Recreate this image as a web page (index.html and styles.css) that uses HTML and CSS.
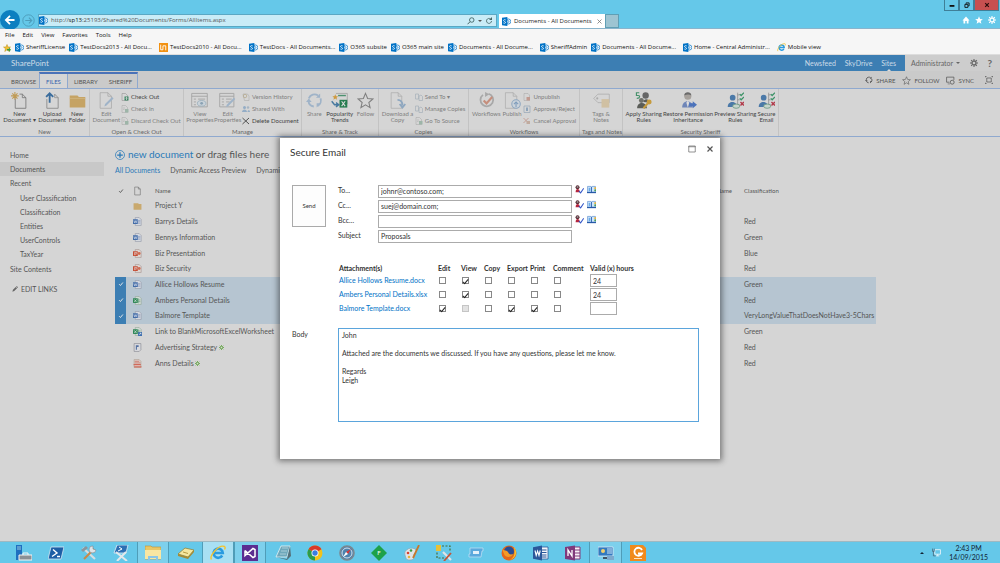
FILE: index.html
```html
<!DOCTYPE html>
<html lang="en">
<head>
<meta charset="utf-8">
<meta name="viewport" content="width=device-width, initial-scale=1">
<title>Documents - All Documents</title>
<link rel="stylesheet" href="styles.css">
</head>
<body>
<svg class="sprite" aria-hidden="true">
  <symbol id="sp" viewBox="0 0 16 16"><circle cx="11" cy="8" r="4.6" fill="#fff" stroke="#0072c6" stroke-width="1.3"/><path d="M9 5l4 3-4 3" fill="none" stroke="#0072c6" stroke-width="1.2"/><path d="M0 1.500L9.500 0v16L0 14.500z" fill="#0072c6"/><path d="M6.500 5.200C4 4 2.500 5 2.700 6.300c.3 1.700 3.600 1.700 3.600 3.400 0 1.500-2 2-3.900.9" fill="none" stroke="#fff" stroke-width="1.400"/></symbol>
  <symbol id="ie" viewBox="0 0 16 16"><path d="M12.200 10.500a4.600 4.600 0 1 1 .6-2.500H4" fill="none" stroke="#2a9be0" stroke-width="2.600"/><path d="M1.500 14.500C-1 11 9-1 14.500 1.500c1 .8.6 2 0 3" fill="none" stroke="#f4c430" stroke-width="1.400"/></symbol>
  <symbol id="word" viewBox="0 0 16 16"><path d="M6 2h9v12H6z" fill="#f4f6fa" stroke="#2b579a" stroke-width=".8"/><path d="M8 5h5.500M8 7.500h5.500M8 10h5.500M8 12h5.500" stroke="#2b579a"/><path d="M0 2.200L9 .5v15L0 13.800z" fill="#2b579a"/><path d="M2 5.500l1.200 5 1.400-4.500L6 10.500l1.200-5" fill="none" stroke="#fff" stroke-width="1.100"/></symbol>
  <symbol id="doc-w" viewBox="0 0 16 16"><path d="M4 1h7l3.500 3.500V15H4z" fill="#d8dbe2" stroke="#8b91a0"/><path d="M8 6h5M8 8.500h5M8 11h5" stroke="#6c86b4"/><path d="M0 4h8.500v8.500H0z" fill="#446da8"/><path d="M1.500 6l1.300 4.500 1.400-4 1.400 4L7 6" fill="none" stroke="#dde4ef"/></symbol>
  <symbol id="doc-p" viewBox="0 0 16 16"><path d="M4 1h7l3.500 3.500V15H4z" fill="#dfd6d2" stroke="#a08f8b"/><circle cx="11" cy="8" r="2.500" fill="#cf6a50"/><path d="M0 4h8.500v8.500H0z" fill="#c54e35"/><path d="M3 11V6h2.500a1.300 1.300 0 0 1 0 3H3" fill="none" stroke="#eee"/></symbol>
  <symbol id="doc-x" viewBox="0 0 16 16"><path d="M4 1h7l3.500 3.500V15H4z" fill="#d5ddd8" stroke="#8ba090"/><path d="M10 4v9M8 7h5M8 10h5" stroke="#5a9a74"/><path d="M0 4h8.500v8.500H0z" fill="#2f8656"/><path d="M2 6l4.500 5M6.500 6L2 11" stroke="#e2eee6" stroke-width="1.200"/></symbol>
  <symbol id="doc-xl" viewBox="0 0 16 16"><use href="#doc-x"/><path d="M9 9h7v7H9z" fill="#3f6fae"/><path d="M11 14l3-3m-2 0h2v2" stroke="#fff" fill="none"/></symbol>
  <symbol id="doc-t" viewBox="0 0 16 16"><path d="M2 1h12v11l-3 3H2z" fill="#d9dade" stroke="#7d7f88"/><path d="M5 4h5v3H7v5H5z" fill="#5470a0"/></symbol>
  <symbol id="doc-pdf" viewBox="0 0 16 16"><path d="M2 1h9l3 3v11H2z" fill="#dfd2d0" stroke="#a98"/><path d="M3 4h8M3 7h10" stroke="#c8705f" stroke-width="1.500"/><path d="M1 9h13v2H1zM2 13h13v2H2z" fill="#cf6a5a"/></symbol>
  <symbol id="folder" viewBox="0 0 16 16"><path d="M1 3h8l1.500 1.500H15v10H1z" fill="#c9a96e"/></symbol>
  <symbol id="page" viewBox="0 0 16 16"><path d="M3 1h6.500L13 4.500V15H3zM9.500 1v3.500H13" fill="none" stroke="#777" stroke-width="1.200"/></symbol>
  <symbol id="tick" viewBox="0 0 16 16"><path d="M3 8.500L6.500 12 13 4" fill="none" stroke="currentColor" stroke-width="2.400"/></symbol>
  <symbol id="newdoc" viewBox="0 0 24 24"><path d="M6 9v14h15V8l-5-5h-4M16 3v5h5" fill="none" stroke="#777" stroke-width="1.200"/><path d="M5.500 0v11M0 5.500h11M1.800 1.800l7.400 7.400M9.200 1.800L1.800 9.200" stroke="#c09b55" stroke-width="1.500"/></symbol>
  <symbol id="upload" viewBox="0 0 24 24"><path d="M4 10v13h16V8l-5-5" fill="none" stroke="#888" stroke-width="1.200"/><path d="M15 3v5h5" fill="none" stroke="#888"/><path d="M8 15V2M3 7l5-5 5 5" fill="none" stroke="#3a6c9c" stroke-width="2.600"/></symbol>
  <symbol id="bigfolder" viewBox="0 0 24 24"><path d="M1 5h11l2 2h9v15H1z" fill="#c5a364"/><path d="M1 9h22" stroke="#d4ba86"/></symbol>
  <symbol id="editdoc" viewBox="0 0 24 24"><path d="M3 1h11l5 5v17H3zM14 1v5h5" fill="none" stroke="#a5a5a5"/><path d="M22 9L12 19l-3 1.500 1-3.500L20 7z" fill="#9fb3c8"/></symbol>
  <symbol id="viewprop" viewBox="0 0 24 24"><path d="M1 2h22v19H1zM1 6h22M4 10h3M10 10h10M4 14h3M4 18h3" fill="none" stroke="#a5a5a5" stroke-width="1.300"/><ellipse cx="15" cy="16" rx="6" ry="4" fill="#c9d2d9" stroke="#90a8b8"/><circle cx="15" cy="16" r="2" fill="#8aa2b4"/></symbol>
  <symbol id="editprop" viewBox="0 0 24 24"><path d="M1 2h20v19H1zM1 6h20M4 10h3M10 10h8M4 14h3M10 14h5M4 18h3" fill="none" stroke="#a5a5a5" stroke-width="1.300"/><path d="M23 10L13 20l-3 1 1-3L21 8z" fill="#9fb3c8"/></symbol>
  <symbol id="share" viewBox="0 0 24 24"><path d="M4 9a8.500 8.500 0 0 1 13-4M20.500 9a8.500 8.500 0 0 1-4 10.500M11 20.500A8.500 8.500 0 0 1 3.500 13" fill="none" stroke="currentColor" stroke-width="2.600"/><path d="M14 8h6V2zM21 16h-6v6zM0 14l4-5 4 5z" fill="currentColor"/></symbol>
  <symbol id="trends" viewBox="0 0 24 24"><path d="M7 2h16v15" fill="none" stroke="#999"/><path d="M10 5h11" stroke="#4d9170" stroke-width="2"/><path d="M12 11h11v11H12z" fill="#277d50"/><path d="M15 13l5 7m0-7l-5 7" stroke="#ddd" stroke-width="1.500"/><path d="M6 3l1.200 3H10L7.800 8l.8 3L6 9.300 3.400 11l.8-3L2 6h2.800z" fill="#cf9a3e"/><path d="M1 13l4 5h5M7 15l4 3-4 3" fill="none" stroke="#47799f" stroke-width="2"/></symbol>
  <symbol id="star" viewBox="0 0 24 24"><path d="M12 2l3 7.200 7.500.6-5.800 5 1.800 7.400L12 18.200 5.500 22.200l1.800-7.400-5.800-5 7.500-.6z" fill="none" stroke="currentColor" stroke-width="1.500"/></symbol>
  <symbol id="download" viewBox="0 0 24 24"><path d="M3 1h10l5 5v17H3zM13 1v5h5" fill="none" stroke="#aaa"/><path d="M12 11c6 0 7 4 7 8M15 17l4 5 4-5" fill="none" stroke="#8ea7c0" stroke-width="2.500"/></symbol>
  <symbol id="workflow" viewBox="0 0 24 24"><path d="M7 4a9 9 0 1 0 8-1.500" fill="none" stroke="#a8a8a8" stroke-width="2.500"/><path d="M10 0v7l6-4z" fill="#a8a8a8"/><path d="M8 12l4 4 8-9" fill="none" stroke="#c58e7c" stroke-width="3"/></symbol>
  <symbol id="publish" viewBox="0 0 24 24"><path d="M2 1h11l5 5v17H2zM13 1v5h5" fill="none" stroke="#aaa"/><circle cx="17" cy="17" r="6" fill="#cbd3db" stroke="#8ea7c0" stroke-width="1.500"/><path d="M17 21v-7m-3 3l3-3 3 3" fill="none" stroke="#7e9cbb" stroke-width="1.500"/></symbol>
  <symbol id="tags" viewBox="0 0 24 24"><path d="M1 9l6-6h16v12H7z" fill="none" stroke="#a9a9a9"/><circle cx="6" cy="9" r="1.500" fill="#aaa"/><path d="M12 10h11v12H12z" fill="#d0c0a2"/></symbol>
  <symbol id="rules" viewBox="0 0 24 24"><circle cx="15" cy="5" r="4.500" fill="#666"/><circle cx="9" cy="12" r="3.500" fill="#70716b"/><path d="M3 23c0-10 13-10 14 0zM12 14c0-5 8-5 9 1z" fill="#5b5d58"/><path d="M6 1H2v4h2.500c3 0 3 4-2 4" fill="none" stroke="#44906a" stroke-width="1.600"/><circle cx="20" cy="14" r="3.500" fill="#c69b3d"/><path d="M18 16l-6 7" stroke="#c69b3d" stroke-width="3"/></symbol>
  <symbol id="person" viewBox="0 0 24 24"><circle cx="11" cy="6" r="5" fill="#a6a19c"/><path d="M6 5c0-6 10-6 10 0-3-2-6-2-10 0z" fill="#6b6b6b"/><path d="M3 22c0-12 15-12 15 0z" fill="#6f86b8"/><path d="M11 12l-2 3 2 7 2-7z" fill="#ddd"/><path d="M13 16h5v-3l6 5-6 5v-3h-5z" fill="#4c73bb"/></symbol>
  <symbol id="people" viewBox="0 0 24 24"><circle cx="8" cy="8" r="4" fill="#4b79a8"/><path d="M1 21c0-9 13-9 13 0z" fill="#4b79a8"/><path d="M15 1v19M15 4h3M15 11h3M15 18h3" stroke="#888"/><path d="M18 3l2 2 4-4M18 9l2 2 4-4" fill="none" stroke="#3c9367" stroke-width="1.800"/><path d="M19 14l5 5m0-5l-5 5" stroke="#b23b4b" stroke-width="2"/><ellipse cx="13" cy="20" rx="5" ry="3" fill="#c7d4cc" stroke="#5c9078"/></symbol>
  <symbol id="s-out" viewBox="0 0 16 16"><path d="M2 1h7l4 4v10H2z" fill="none" stroke="#888"/><path d="M7 7h8v8H7z" fill="#3b8462"/><path d="M11 14V9M8.500 11L11 8.500l2.500 2.500" stroke="#ddd" fill="none" stroke-width="1.500"/></symbol>
  <symbol id="s-dim" viewBox="0 0 16 16"><path d="M2 1h7l4 4v10H2z" fill="none" stroke="#a5a5a5"/><path d="M8 8h7v7H8z" fill="#9db5a8"/><path d="M4 6h4M4 9h3" stroke="#aaa"/></symbol>
  <symbol id="s-send" viewBox="0 0 16 16"><path d="M1 2h6v10H1zM8 6l4-2 3 3v8H8z" fill="none" stroke="#a2adb8" stroke-width="1.300"/></symbol>
  <symbol id="s-red" viewBox="0 0 16 16"><path d="M2 1h8l3 3v11H2z" fill="none" stroke="#a5a5a5"/><path d="M7 8h7v7H7z" fill="#c19a90"/></symbol>
  <symbol id="s-app" viewBox="0 0 16 16"><path d="M2 2h12v13H2z" fill="none" stroke="#96a6b8" stroke-width="1.400"/><path d="M6 5h4v7H6z" fill="#8ea4ba"/></symbol>
  <symbol id="s-cross" viewBox="0 0 16 16"><path d="M1 2l10 10M11 2L1 12" stroke="#c19a90" stroke-width="1.800"/><path d="M7 8h7v6H7z" fill="#c0ab9f"/></symbol>
  <symbol id="s-hist" viewBox="0 0 16 16"><path d="M2 2h9l3 4v9H5z" fill="none" stroke="#a5a5a5"/><circle cx="6" cy="6" r="3.500" fill="none" stroke="#b5a98c" stroke-width="1.500"/></symbol>
  <symbol id="s-peo" viewBox="0 0 16 16"><circle cx="5" cy="5" r="3" fill="#94adc6"/><circle cx="12" cy="5" r="2.500" fill="#a6b5c3"/><path d="M0 14c0-7 10-7 10 0zM11 14c0-5 5-5 5 0z" fill="#94adc6"/></symbol>
  <symbol id="s-x" viewBox="0 0 16 16"><path d="M1 2l13 12M14 2L1 14" stroke="#444" stroke-width="1.800"/></symbol>
  <symbol id="gear" viewBox="0 0 16 16"><circle cx="8" cy="8" r="4" fill="none" stroke="currentColor" stroke-width="2.600"/><path d="M8 0v3M8 13v3M0 8h3M13 8h3M2.300 2.300l2 2M11.700 11.700l2 2M2.300 13.700l2-2M11.700 4.300l2-2" stroke="currentColor" stroke-width="2.200"/></symbol>
  <symbol id="syncic" viewBox="0 0 16 16"><path d="M6 11H1V2h13v5" fill="none" stroke="currentColor" stroke-width="1.300"/><path d="M3 14h4" stroke="currentColor"/><circle cx="11" cy="11" r="3.500" fill="none" stroke="currentColor" stroke-width="1.400"/></symbol>
  <symbol id="focus" viewBox="0 0 16 16"><path d="M3.500 4h9v8h-9zM0 3V1h3M13 1h3v2M16 13v2h-3M3 15H0v-2" fill="none" stroke="currentColor" stroke-width="1.400"/></symbol>
  <symbol id="pencil" viewBox="0 0 16 16"><path d="M1 15l1.500-5L10 2.500l3.500 3.500L6 13.500zM11 1.500L12.500 0 16 3.500 14.500 5z" fill="#666"/></symbol>
  <symbol id="plus" viewBox="0 0 16 16"><circle cx="8" cy="8" r="7.200" fill="none" stroke="#2a7ab8" stroke-width="1.200"/><path d="M8 3.500v9M3.500 8h9" stroke="#2a7ab8" stroke-width="2"/></symbol>
  <symbol id="check-names" viewBox="0 0 16 16"><circle cx="4.500" cy="4" r="3.500" fill="#5a2a34"/><path d="M1 13c0-8 7-8 8 0z" fill="#b5263e"/><path d="M3 2h3v3H3z" fill="#999"/><path d="M7 11l3 3L15.500 6" fill="none" stroke="#3557c8" stroke-width="1.800"/></symbol>
  <symbol id="book" viewBox="0 0 16 16"><path d="M1 2.500h6l1 1 1-1h6v10H1z" fill="#cfe6fb" stroke="#5d8fd0" stroke-width="1.200"/><path d="M0 13.500h16" stroke="#2456a6" stroke-width="2"/><path d="M8 3.500v9" stroke="#2d62b0" stroke-width="1.600"/><path d="M3 5h3v6H3z" fill="#69a9e6"/><path d="M13 4h3v3h-3z" fill="#e8b53c"/><path d="M13 8h3v3h-3z" fill="#4ba05a"/></symbol>
</svg>

<header class="chrome">
  <nav class="navrow">
    <button class="back" aria-label="Back"><svg viewBox="0 0 16 16"><path d="M14 8H3M8 2.500L2.500 8 8 13.500" fill="none" stroke="#fff" stroke-width="2.400"/></svg></button>
    <button class="forward" aria-label="Forward"><svg viewBox="0 0 16 16"><circle cx="8" cy="8" r="7" fill="none" stroke="#4d9dbb" stroke-width="1.200"/><path d="M4 8h8M8.500 4.500L12 8l-3.500 3.500" fill="none" stroke="#4d9dbb" stroke-width="1.400"/></svg></button>
    <div class="address">
      <svg class="i9"><use href="#sp"/></svg>
      <span class="url">http://<b>sp13</b>:25193/Shared%20Documents/Forms/AllItems.aspx</span>
      <button class="plain" aria-label="Search"><svg class="i8" viewBox="0 0 16 16"><circle cx="9.500" cy="6" r="4.500" fill="none" stroke="#466" stroke-width="1.800"/><path d="M6 9.500l-5 5" stroke="#466" stroke-width="2"/></svg></button>
      <span class="caret"></span>
      <button class="plain" aria-label="Refresh"><svg class="i8" viewBox="0 0 16 16"><path d="M13 8a5 5 0 1 1-2-4.200" fill="none" stroke="#466" stroke-width="1.700"/><path d="M8 6h6V0z" fill="#466"/></svg></button>
    </div>
    <div class="btab"><svg class="i9"><use href="#sp"/></svg><span>Documents - All Documents</span><button class="plain" aria-label="Close tab"><svg class="i5" viewBox="0 0 10 10"><path d="M1 1l8 8M9 1L1 9" stroke="#777" stroke-width="1.600"/></svg></button></div>
    <button class="newtab" aria-label="New tab"></button>
    <div class="corner">
      <div class="winbtns">
        <button aria-label="Minimize"><svg viewBox="0 0 10 10"><path d="M1 5h8v3H1z" fill="#111"/></svg></button>
        <button aria-label="Restore"><svg viewBox="0 0 10 10"><path d="M1.500 4h5v5h-5zM3.500 3V1.500h5v5H7" fill="none" stroke="#111" stroke-width="1.500"/></svg></button>
        <button class="close" aria-label="Close"><svg viewBox="0 0 10 10"><path d="M2 2l6 6M8 2L2 8" stroke="#2a0c0a" stroke-width="2"/></svg></button>
      </div>
      <div class="tools">
        <button class="plain" aria-label="Home"><svg class="i8" viewBox="0 0 16 16"><path d="M1 9l7-8 7 8h-2v6H9.500v-5h-3v5H3V9z" fill="#fff"/></svg></button>
        <button class="plain" aria-label="Favorites"><svg class="i8" viewBox="0 0 24 24"><path d="M12 1l3.200 7.800 8.300.6-6.400 5.300 2 8.300L12 18.500 4.900 23l2-8.300L.5 9.400l8.300-.6z" fill="#fff"/></svg></button>
        <button class="plain" aria-label="Tools"><svg class="i8"><use href="#gear"/></svg></button>
      </div>
    </div>
  </nav>
</header>

<div class="bars">
  <nav class="menu"><a href="#">File</a><a href="#">Edit</a><a href="#">View</a><a href="#">Favorites</a><a href="#">Tools</a><a href="#">Help</a></nav>
  <nav class="favs">
    <svg class="i8" viewBox="0 0 16 16"><path d="M8 1l2 5h5l-4 3.500L12.500 15 8 11.500 3.500 15 5 9.500 1 6h5z" fill="#f0c033" stroke="#b88a14"/><path d="M8 10h4V7l4 4.500L12 16v-3H8z" fill="#3d9b40"/></svg>
    <a href="#"><svg class="i9"><use href="#sp"/></svg>SheriffLicense</a>
    <a href="#" class="cut"><svg class="i9"><use href="#sp"/></svg>TestDocs2013 - All Docu...</a>
    <a href="#" class="cut"><svg class="i9" viewBox="0 0 16 16"><path d="M0 0h16v16H0z" fill="#f29111"/><path d="M3 3v9h4V5h5v8" fill="none" stroke="#fff" stroke-width="1.600"/></svg>TestDocs2010 - All Docu...</a>
    <a href="#"><svg class="i9"><use href="#sp"/></svg>TestDocs - All Documents...</a>
    <a href="#"><svg class="i9"><use href="#sp"/></svg>O365 subsite</a>
    <a href="#"><svg class="i9"><use href="#sp"/></svg>O365 main site</a>
    <a href="#" class="cut"><svg class="i9"><use href="#sp"/></svg>Documents - All Docume...</a>
    <a href="#"><svg class="i9"><use href="#sp"/></svg>SheriffAdmin</a>
    <a href="#" class="cut"><svg class="i9"><use href="#sp"/></svg>Documents - All Docume...</a>
    <a href="#" class="cut"><svg class="i9"><use href="#sp"/></svg>Home - Central Administr...</a>
    <a href="#"><svg class="i9"><use href="#ie"/></svg>Mobile view</a>
  </nav>
</div>

<main class="site">
  <div class="suite">
    <span class="brand">SharePoint</span>
    <nav class="suite-links"><a href="#">Newsfeed</a><a href="#">SkyDrive</a><a href="#" class="here">Sites</a></nav>
    <div class="user"><button class="plain">Administrator<span class="caret"></span></button><button class="plain" aria-label="Settings"><svg class="i8"><use href="#gear"/></svg></button><button class="plain help" aria-label="Help">?</button></div>
  </div>

  <div class="tabrow">
    <button class="tab browse">BROWSE</button>
    <div class="tabset"><button class="tab on">FILES</button><button class="tab">LIBRARY</button><button class="tab">SHERIFF</button></div>
    <div class="actions">
      <button class="plain"><svg class="i8"><use href="#share"/></svg>SHARE</button>
      <button class="plain"><svg class="i9"><use href="#star"/></svg>FOLLOW</button>
      <button class="plain"><svg class="i9"><use href="#syncic"/></svg>SYNC</button>
      <button class="plain focus" aria-label="Focus on content"><svg class="i8"><use href="#focus"/></svg></button>
    </div>
  </div>

  <div class="ribbon">
    <section class="group g-new"><div class="row">
      <button class="big"><svg><use href="#newdoc"/></svg>New<br>Document ▾</button>
      <button class="big"><svg><use href="#upload"/></svg>Upload<br>Document</button>
      <button class="big"><svg><use href="#bigfolder"/></svg>New<br>Folder</button></div><h2>New</h2></section>
    <section class="group g-open"><div class="row">
      <button class="big off"><svg><use href="#editdoc"/></svg>Edit<br>Document</button>
      <div class="stack"><button><svg><use href="#s-out"/></svg>Check Out</button><button class="off"><svg><use href="#s-dim"/></svg>Check In</button><button class="off"><svg><use href="#s-dim"/></svg>Discard Check Out</button></div></div><h2>Open &amp; Check Out</h2></section>
    <section class="group g-manage"><div class="row">
      <button class="big off"><svg><use href="#viewprop"/></svg>View<br>Properties</button>
      <button class="big off"><svg><use href="#editprop"/></svg>Edit<br>Properties</button>
      <div class="stack"><button class="off"><svg><use href="#s-hist"/></svg>Version History</button><button class="off"><svg><use href="#s-peo"/></svg>Shared With</button><button><svg><use href="#s-x"/></svg>Delete Document</button></div></div><h2>Manage</h2></section>
    <section class="group g-share"><div class="row">
      <button class="big off"><svg class="soft"><use href="#share"/></svg>Share</button>
      <button class="big"><svg><use href="#trends"/></svg>Popularity<br>Trends</button>
      <button class="big off"><svg><use href="#star"/></svg>Follow</button></div><h2>Share &amp; Track</h2></section>
    <section class="group g-copies"><div class="row">
      <button class="big off"><svg><use href="#download"/></svg>Download a<br>Copy</button>
      <div class="stack"><button class="off"><svg><use href="#s-send"/></svg>Send To ▾</button><button class="off"><svg><use href="#s-send"/></svg>Manage Copies</button><button class="off"><svg><use href="#s-dim"/></svg>Go To Source</button></div></div><h2>Copies</h2></section>
    <section class="group g-flow"><div class="row">
      <button class="big off"><svg><use href="#workflow"/></svg>Workflows</button>
      <button class="big off"><svg><use href="#publish"/></svg>Publish</button>
      <div class="stack"><button class="off"><svg><use href="#s-red"/></svg>Unpublish</button><button class="off"><svg><use href="#s-app"/></svg>Approve/Reject</button><button class="off"><svg><use href="#s-cross"/></svg>Cancel Approval</button></div></div><h2>Workflows</h2></section>
    <section class="group g-tags"><div class="row"><button class="big off"><svg><use href="#tags"/></svg>Tags &amp;<br>Notes</button></div><h2>Tags and Notes</h2></section>
    <section class="group g-sec"><div class="row">
      <button class="big"><svg><use href="#rules"/></svg>Apply Sharing<br>Rules</button>
      <button class="big"><svg><use href="#person"/></svg>Restore Permission<br>Inheritance</button>
      <button class="big"><svg><use href="#people"/></svg>Preview Sharing<br>Rules</button>
      <button class="big"><svg><use href="#people"/></svg>Secure<br>Email</button></div><h2>Security Sheriff</h2></section>
  </div>

  <div class="content">
    <nav class="side">
      <a href="#">Home</a><a href="#" class="current">Documents</a><a href="#">Recent</a>
      <div class="sub"><a href="#">User Classification</a><a href="#">Classification</a><a href="#">Entities</a><a href="#">UserControls</a><a href="#">TaxYear</a></div>
      <a href="#">Site Contents</a>
      <button class="plain edit"><svg class="i8"><use href="#pencil"/></svg>EDIT LINKS</button>
    </nav>
    <section class="library">
      <p class="new"><svg><use href="#plus"/></svg><span><a href="#">new document</a> or drag files here</span></p>
      <nav class="views"><a href="#" class="sel">All Documents</a><a href="#">Dynamic Access Preview</a><a href="#">Dynamic Access</a></nav>
      <table class="files">
        <colgroup><col class="c-tick"><col class="c-type"><col class="c-name"><col class="c-alt"><col></colgroup>
        <thead><tr><th><svg class="i6"><use href="#tick"/></svg></th><th><svg class="i10"><use href="#page"/></svg></th><th>Name</th><th class="alt">Name</th><th>Classification</th></tr></thead>
        <tbody>
          <tr><td></td><td><svg class="i10"><use href="#folder"/></svg></td><td>Project Y</td><td></td><td></td></tr>
          <tr><td></td><td><svg class="i9"><use href="#doc-w"/></svg></td><td>Barrys Details</td><td></td><td>Red</td></tr>
          <tr><td></td><td><svg class="i9"><use href="#doc-w"/></svg></td><td>Bennys Information</td><td></td><td>Green</td></tr>
          <tr><td></td><td><svg class="i9"><use href="#doc-p"/></svg></td><td>Biz Presentation</td><td></td><td>Blue</td></tr>
          <tr><td></td><td><svg class="i9"><use href="#doc-p"/></svg></td><td>Biz Security</td><td></td><td>Red</td></tr>
          <tr class="picked"><td><svg class="i6"><use href="#tick"/></svg></td><td><svg class="i9"><use href="#doc-w"/></svg></td><td>Allice Hollows Resume</td><td></td><td>Green</td></tr>
          <tr class="picked"><td><svg class="i6"><use href="#tick"/></svg></td><td><svg class="i9"><use href="#doc-x"/></svg></td><td>Ambers Personal Details</td><td></td><td>Red</td></tr>
          <tr class="picked"><td><svg class="i6"><use href="#tick"/></svg></td><td><svg class="i9"><use href="#doc-w"/></svg></td><td>Balmore Template</td><td></td><td>VeryLongValueThatDoesNotHave3-5Chars</td></tr>
          <tr><td></td><td><svg class="i9"><use href="#doc-xl"/></svg></td><td>Link to BlankMicrosoftExcelWorksheet</td><td></td><td>Green</td></tr>
          <tr><td></td><td><svg class="i9"><use href="#doc-t"/></svg></td><td>Advertising Strategy <svg class="i5 fresh"><use href="#gear"/></svg></td><td></td><td>Red</td></tr>
          <tr><td></td><td><svg class="i9"><use href="#doc-pdf"/></svg></td><td>Anns Details <svg class="i5 fresh"><use href="#gear"/></svg></td><td></td><td>Red</td></tr>
        </tbody>
      </table>
    </section>
  </div>

  <div class="overlay">
    <form class="dialog" role="dialog" aria-labelledby="dlg-title">
      <header><h1 id="dlg-title">Secure Email</h1>
        <button type="button" class="plain" aria-label="Maximize"><svg class="i8" viewBox="0 0 16 16"><path d="M1.500 2h13v12h-13zM1 3.500h14" fill="none" stroke="#666" stroke-width="1.400"/></svg></button>
        <button type="button" class="plain" aria-label="Close"><svg class="i8" viewBox="0 0 16 16"><path d="M3 3l10 10M13 3L3 13" stroke="#555" stroke-width="2.400"/></svg></button></header>
      <div class="fields">
        <button type="button" class="send">Send</button>
        <div class="rcpts">
          <label for="to">To...</label><input id="to" value="johnr@contoso.com;"><span class="pick"><svg class="i9"><use href="#check-names"/></svg><svg class="i9"><use href="#book"/></svg></span>
          <label for="cc">Cc...</label><input id="cc" value="suej@domain.com;"><span class="pick"><svg class="i9"><use href="#check-names"/></svg><svg class="i9"><use href="#book"/></svg></span>
          <label for="bcc">Bcc...</label><input id="bcc"><span class="pick"><svg class="i9"><use href="#check-names"/></svg><svg class="i9"><use href="#book"/></svg></span>
          <label for="subject">Subject</label><input id="subject" value="Proposals"><span></span>
        </div>
        <table class="rights">
          <colgroup><col class="r-name"><col class="r-flag"><col class="r-flag"><col class="r-flag"><col class="r-flag"><col class="r-flag"><col class="r-comment"><col></colgroup>
          <thead><tr><th>Attachment(s)</th><th>Edit</th><th>View</th><th>Copy</th><th>Export</th><th>Print</th><th>Comment</th><th>Valid (x) hours</th></tr></thead>
          <tbody>
            <tr><td><a href="#">Allice Hollows Resume.docx</a></td><td><input type="checkbox" aria-label="Edit"></td><td><input type="checkbox" aria-label="View" checked></td><td><input type="checkbox" aria-label="Copy"></td><td><input type="checkbox" aria-label="Export"></td><td><input type="checkbox" aria-label="Print"></td><td><input type="checkbox" aria-label="Comment"></td><td><input class="hours" aria-label="Valid hours" value="24"></td></tr>
            <tr><td><a href="#">Ambers Personal Details.xlsx</a></td><td><input type="checkbox" aria-label="Edit"></td><td><input type="checkbox" aria-label="View" checked></td><td><input type="checkbox" aria-label="Copy"></td><td><input type="checkbox" aria-label="Export"></td><td><input type="checkbox" aria-label="Print"></td><td><input type="checkbox" aria-label="Comment"></td><td><input class="hours" aria-label="Valid hours" value="24"></td></tr>
            <tr><td><a href="#">Balmore Template.docx</a></td><td><input type="checkbox" aria-label="Edit" checked></td><td><input type="checkbox" aria-label="View" disabled></td><td><input type="checkbox" aria-label="Copy"></td><td><input type="checkbox" aria-label="Export" checked></td><td><input type="checkbox" aria-label="Print" checked></td><td><input type="checkbox" aria-label="Comment"></td><td><input class="hours" aria-label="Valid hours"></td></tr>
          </tbody>
        </table>
        <label class="body-label" for="body">Body</label>
        <textarea id="body">John

Attached are the documents we discussed. If you have any questions, please let me know.

Regards
Leigh</textarea>
      </div>
    </form>
  </div>
</main>

<footer class="taskbar">
  <div class="apps">
    <button aria-label="Server Manager"><svg viewBox="0 0 16 16"><path d="M0 0h6v15H0z" fill="#1f6fc0"/><path d="M1 2h4M1 4h4" stroke="#9cd"/><path d="M3 10h13v5H3z" fill="#8a9096" stroke="#f5f5f5"/><path d="M7 10V8h5v2" fill="none" stroke="#f5f5f5"/></svg></button>
    <button aria-label="PowerShell"><svg viewBox="0 0 16 16"><path d="M3 2h13l-3 12H0z" fill="#1d5fa6" stroke="#d6e8f5" stroke-width=".8"/><path d="M5 4.500L9 8l-5 3.500M9 11.500h3" fill="none" stroke="#fff" stroke-width="1.400"/></svg></button>
    <button aria-label="Admin Tools"><svg viewBox="0 0 16 16"><path d="M2 3l12 11" stroke="#d8dde0" stroke-width="2.200"/><path d="M0 5l5-4 2 2-5 4z" fill="#8b959c"/><path d="M13 4L3 14" stroke="#c88a4a" stroke-width="2.200"/><path d="M15 5a3.500 3.500 0 1 1-3-4v3z" fill="#dfe4e8" stroke="#7d878e" stroke-width=".6"/></svg></button>
    <button aria-label="Management Shell"><svg viewBox="0 0 16 16"><path d="M4 0h11l-2 8H1z" fill="#2c6fb3" stroke="#e6f0f8" stroke-width=".8"/><path d="M3 7l11 9M13 7L4 16" stroke="#e3e8eb" stroke-width="2"/><path d="M6 2l3 2-4 2" stroke="#fff" fill="none"/></svg></button>
    <button class="open" aria-label="File Explorer"><svg viewBox="0 0 16 16"><path d="M0 1h6l1 1h9v12H0z" fill="#e9c765" stroke="#b99235" stroke-width=".6"/><path d="M0 5h16v9H0z" fill="#f9e6a2"/><path d="M3 16v-5h10v5h-2v-3H5v3z" fill="#8cc6e8"/></svg></button>
    <button aria-label="Notes"><svg viewBox="0 0 16 16"><path d="M0 9l7-6 9 2-6 7z" fill="#f5e7a0" stroke="#8c7a2c" stroke-width=".7"/><path d="M0 9l10 3v2L0 11zM10 12l6-7v2l-6 7z" fill="#a58c35"/><path d="M5 7l5 1.500" stroke="#b59a40"/></svg></button>
    <button class="open ie" aria-label="Internet Explorer"><svg viewBox="0 0 16 16"><use href="#ie"/></svg></button>
    <button class="open" aria-label="Visual Studio"><svg viewBox="0 0 16 16"><path d="M0 0h16v16H0z" fill="#5c2d91"/><path d="M3 5.500v5l8-7 2 1v7l-2 1-8-7" fill="none" stroke="#fff" stroke-width="1.500"/></svg></button>
    <button aria-label="Notebook"><svg viewBox="0 0 16 16"><path d="M6 1h9l-3 11H1z" fill="#6fa8bb" stroke="#e5f1f4" stroke-width=".8"/><path d="M1 12l11 2 3-13 1 10-4 4z" fill="#55707a"/><path d="M7 3h6M6 6h6M5 9h6" stroke="#a9cdd8"/></svg></button>
    <button aria-label="Chrome"><svg viewBox="0 0 16 16"><circle cx="8" cy="8" r="7.500" fill="#f2c21a"/><path d="M8 8L1.500 4.250A7.500 7.500 0 0 1 14.500 4.250z" fill="#d93a2b"/><path d="M8 8L1.500 4.250A7.500 7.500 0 0 0 8 15.500z" fill="#2c9b4a"/><circle cx="8" cy="8" r="3.500" fill="#fff"/><circle cx="8" cy="8" r="2.700" fill="#3a7de0"/></svg></button>
    <button aria-label="Safari"><svg viewBox="0 0 16 16"><circle cx="8" cy="8" r="7" fill="#4f83ae" stroke="#7b8790" stroke-width="1.600"/><circle cx="8" cy="8" r="5" fill="none" stroke="#d4e2ec"/><path d="M12 4L9 9 7 7z" fill="#d33"/><path d="M4 12l5-3-2-2z" fill="#fff"/></svg></button>
    <button aria-label="Fiddler"><svg viewBox="0 0 16 16"><path d="M8 0l8 8-8 8-8-8z" fill="#1ea14a"/><text x="8" y="10" text-anchor="middle" class="logo6">F</text></svg></button>
    <button aria-label="Paint"><svg viewBox="0 0 16 16"><path d="M1 10c-2-6 8-9 11-5 2 3-3 3-2 5s0 5-4 5-4-2-5-5z" fill="#dfe5ea" stroke="#8aa0ad" stroke-width=".6"/><circle cx="4" cy="8" r="1.300" fill="#d9442f"/><circle cx="7" cy="5.500" r="1.300" fill="#3d9b40"/><circle cx="5" cy="12" r="1.300" fill="#e8b53c"/><path d="M15 0L9 13" stroke="#c7792c" stroke-width="1.800"/></svg></button>
    <button aria-label="Snipping"><svg viewBox="0 0 16 16"><path d="M1 4v9h8M6 1h8v6" fill="none" stroke="#4a6c3a" stroke-dasharray="2 1.500" stroke-width="1.200"/><path d="M0 0h5v6H0z" fill="#e8c136"/><path d="M7 7l8 8" stroke="#dfe4e8" stroke-width="2.200"/><path d="M15 8l-7 8" stroke="#c3563a" stroke-width="1.800"/></svg></button>
    <button aria-label="Run"><svg viewBox="0 0 16 16"><path d="M2 3h13v3h-1l-1 6H1V9h1z" fill="#5aa9dd" stroke="#b9ddf2" stroke-width=".8"/><path d="M5 6h6v3H5z" fill="#e3f1fa"/></svg></button>
    <button aria-label="Firefox"><svg viewBox="0 0 16 16"><circle cx="8" cy="8" r="7.500" fill="#e2671b"/><circle cx="8" cy="6.500" r="5" fill="#2b4c92"/><path d="M1 4c2 2 5 1 6 3s2 3 5 2c-1 4-8 4-9 0z" fill="#f39a24"/><path d="M13 2c4 5 2 11-4 13 5-3 5-7 4-13z" fill="#f7c430"/></svg></button>
    <button aria-label="Word"><svg viewBox="0 0 16 16"><use href="#word"/></svg></button>
    <button aria-label="OneNote"><svg viewBox="0 0 16 16"><path d="M7 2h8v12H7z" fill="#f6eef5" stroke="#80397b"/><path d="M10 5h5M10 8h5M10 11h5" stroke="#80397b"/><path d="M0 2l10-1.500v15L0 14z" fill="#80397b"/><path d="M3 11V5l4 6V5" fill="none" stroke="#fff" stroke-width="1.300"/></svg></button>
    <button class="open dark" aria-label="Remote Desktop"><svg viewBox="0 0 16 16"><path d="M0 2h15v9H0z" fill="#3279bf" stroke="#dcebf7" stroke-width=".8"/><circle cx="5" cy="6" r="2" fill="#f0d070"/><path d="M9 4h5M9 6h5M9 8h5" stroke="#cfe5f5"/><path d="M5 12h6v2H5z" fill="#456"/><path d="M9 11h7v4H9z" fill="#7da9cc"/></svg></button>
    <button aria-label="Foxit"><svg viewBox="0 0 16 16"><path d="M0 0h13l3 3v13H0z" fill="#f08a1c"/><path d="M12 5a4 4 0 1 0 0 3.500H8" fill="none" stroke="#fff" stroke-width="1.800"/><path d="M4 13.500h8" stroke="#fce3c4"/></svg></button>
  </div>
  <div class="tray"><span class="up"></span><svg class="i9" viewBox="0 0 16 16"><path d="M5 3h10v8H5zM7 14h6M10 11v3" fill="none" stroke="#eef6fa" stroke-width="1.500"/><path d="M1 1v5h3V1M2.500 6v8h4" fill="none" stroke="#456" stroke-width="1.200"/></svg>
    <time>2:43 PM<br>14/09/2015</time></div>
</footer>
</body>
</html>
```
FILE: styles.css
```css
:root {
  --sky: #65c8e9;
  --blue: #3c7eb3;
  --line: #8fa9cf;
  --panel: #d5d5d5;
  --xs: 6px;
  --s: 7px;
  --m: 8px;
  --l: 10px;
  --ui: "Open Sans", "Noto Sans", sans-serif;
}
* { box-sizing: border-box; }
body {
  margin: 0;
  min-height: 100vh;
  display: flex;
  flex-direction: column;
  font: var(--s)/9px Lato, "Open Sans", sans-serif;
  color: #555;
  background: var(--panel);
  overflow: hidden;
}
button, input, textarea { font: inherit; color: inherit; margin: 0; }
button { border: 0; background: none; padding: 0; white-space: nowrap; }
a { color: inherit; text-decoration: none; white-space: nowrap; }
h1, h2, p { margin: 0; font-weight: 400; }
svg { display: block; flex: none; }
.sprite { position: absolute; width: 0; height: 0; }
.plain { display: inline-flex; align-items: center; gap: 3px; }
.i5 { width: 5px; height: 5px; }
.i6 { width: 6px; height: 6px; }
.i8 { width: 8px; height: 8px; }
.i9 { width: 9px; height: 9px; }
.i10 { width: 9px; height: 10px; }
.caret { border: 2px solid transparent; border-top-color: currentColor; border-bottom: 0; width: 4px; }

/* browser chrome */
.chrome { background: var(--sky); border-bottom: 1px solid #8ab4cc; font-family: var(--ui); font-size: var(--xs); }
.navrow { display: flex; align-items: flex-end; height: 28px; }
.back { width: 20px; height: 20px; border-radius: 50%; background: #0c7fc0; display: grid; place-items: center; margin-bottom: -2px; }
.back svg { width: 12px; height: 12px; }
.forward { width: 13px; height: 13px; margin: 0 3px 1px 2px; }
.forward svg { width: 13px; height: 13px; }
.address { flex: 0 1 459px; height: 13px; display: flex; align-items: center; gap: 3px; padding: 0 3px 0 0; background: #c9ecf7; border: 1px solid #5aa8c4; margin: 0 2px 1px 0; color: #555; }
.url { flex: 1; white-space: nowrap; }
.url b { font-weight: 400; color: #111; }
.btab { height: 14px; display: flex; align-items: center; gap: 3px; padding: 0 3px; background: #fff; color: #222; white-space: nowrap; }
.btab span { width: 80px; }
.newtab { width: 14px; height: 14px; background: #9dc4d2; border: 1px solid #5f9fb5; }
.corner { margin-left: auto; align-self: stretch; display: flex; flex-direction: column; align-items: flex-end; justify-content: space-between; }
.winbtns { display: flex; margin-right: 1px; }
.winbtns button { width: 15px; height: 11px; border: 1px solid #3f7f98; border-top: 0; display: grid; place-items: center; }
.winbtns .close { width: 25px; background: #c75050; }
.winbtns svg { width: 6px; height: 6px; }
.tools { display: flex; gap: 5px; padding: 0 4px 4px; color: #fff; }
.bars { background: #f6f6f6; color: #111; font-family: var(--ui); font-size: var(--xs); border-bottom: 1px solid #ddd; }
.menu { display: flex; gap: 8px; padding: 2px 5px 1px; line-height: 8px; }
.favs { display: flex; align-items: center; gap: 4px; padding: 3px 3px 2px; }
.favs a { display: flex; align-items: center; gap: 2px; line-height: 9px; }
.favs .cut { padding-right: 3px; }

/* site header */
.site { flex: 1; display: flex; flex-direction: column; position: relative; }
.suite { display: flex; align-items: stretch; height: 16px; background: var(--blue); color: #ccdce8; }
.brand { flex: 1; padding-left: 11px; line-height: 16px; font-size: var(--m); }
.suite-links { display: flex; gap: 9px; padding-right: 9px; line-height: 16px; }
.here { display: flex; flex-direction: column; align-items: center; }
.here::after { content: ""; border: 2px solid transparent; border-bottom-color: #ddd; border-top: 0; margin-top: -2px; }
.user { display: flex; align-items: center; justify-content: space-between; width: 95px; padding: 0 8px 0 6px; background: #cdcdcd; color: #666; }
.help { font-size: var(--l); font-weight: 700; }
.tabrow { display: flex; align-items: flex-end; height: 18px; background: #cacaca; font-size: var(--xs); border-bottom: 1px solid var(--line); }
.tab { height: 14px; }
.browse { width: 39px; padding-left: 11px; text-align: left; }
.tabset { display: flex; height: 16px; border: 1px solid var(--line); border-top: 2px solid #4a72b8; border-bottom: 0; }
.tabset .tab { padding: 0 6px; height: 100%; }
.tabset .on { color: #3563ad; background: var(--panel); border-right: 1px solid var(--line); }
.tabset .tab:last-child { padding: 0 5px; }
.actions { margin-left: auto; display: flex; align-items: center; gap: 7px; height: 16px; padding-right: 7px; }
.focus { margin-left: 4px; }

/* ribbon */
.ribbon { display: flex; height: 48px; font-size: var(--xs); line-height: 6px; color: #444; border-bottom: 1px solid var(--line); }
.group { flex: none; display: flex; flex-direction: column; justify-content: space-between; border-right: 1px solid #c3c3c3; padding: 3px 2px 1px; }
.row { display: flex; justify-content: space-around; }
.group h2 { font-size: var(--xs); line-height: 7px; text-align: center; color: #666; white-space: nowrap; }
.big { display: flex; flex-direction: column; align-items: center; text-align: center; gap: 2px; }
.big svg { width: 17px; height: 17px; }
.off { color: #808080; }
.soft { color: #9fb3c8; }
.stack { display: flex; flex-direction: column; gap: 3px; }
.stack button { display: flex; align-items: center; gap: 2px; height: 9px; }
.stack svg { width: 8px; height: 8px; }
.g-new { width: 90px; }
.g-open { width: 94px; }
.g-manage { width: 118px; }
.g-share { width: 77px; }
.g-copies { width: 90px; }
.g-flow { width: 111px; }
.g-tags { width: 43px; }
.g-sec { width: 156px; }

/* page */
.content { flex: 1; display: flex; }
.side { width: 104px; padding-top: 11px; display: flex; flex-direction: column; }
.side a { display: block; padding-left: 10px; line-height: 14px; }
.side .current { background: #c8c8c8; }
.sub { padding: 1px 0 1px 10px; }
.edit { margin-top: 6px; padding-left: 12px; gap: 3px; line-height: 14px; }
.edit svg { width: 6px; }
.library { flex: 1; padding: 10px 0 0 11px; }
.new { display: flex; align-items: center; gap: 3px; font-size: var(--l); line-height: 15px; }
.new svg { width: 10px; height: 10px; }
.new a { color: #2a7ab8; }
.views { display: flex; gap: 10px; padding-top: 4px; line-height: 9px; }
.sel { color: #2a7ab8; }
.files { width: 761px; height: 188px; margin-top: 8px; border-collapse: collapse; table-layout: fixed; }
.files th, .files td { height: 15px; padding: 0; text-align: left; font-weight: 400; white-space: nowrap; vertical-align: middle; }
.files th { font-size: var(--xs); }
.files td:nth-child(2), .files th:nth-child(2) { padding-left: 7px; }
.files td:first-child svg, .files th:first-child svg { margin: 0 auto; }
.files .alt { text-align: right; padding-right: 12px; }
.c-tick { width: 11px; }
.c-type { width: 29px; }
.c-name { width: 400px; }
.c-alt { width: 189px; }
.picked { background: #b6c5d1; }
.picked td:first-child { background: var(--blue); color: #eee; }
.fresh { display: inline-block; color: #4f9a2b; }

/* dialog */
.overlay { position: absolute; inset: 0; display: grid; place-items: center; }
.dialog { width: 440px; min-height: 321px; background: #fff; color: #333; box-shadow: 0 0 6px 2px rgba(0, 0, 0, .45); }
.dialog header { display: flex; align-items: flex-start; gap: 10px; height: 47px; padding: 7px 6px 0 10px; }
.dialog h1 { flex: 1; font-size: var(--l); line-height: 15px; }
.fields { display: grid; grid-template-columns: 34px 1fr; column-gap: 12px; align-items: start; padding: 0 21px 36px 12px; }
.send { height: 42px; border: 1px solid #aaa; background: #fdfdfd; font-size: var(--xs); }
.rcpts { display: grid; grid-template-columns: 40px 194px 1fr; row-gap: 2px; }
.rcpts label { line-height: 11px; }
.dialog input:not([type]), textarea { border: 1px solid #ababab; background: #fff; padding: 0 2px; min-width: 0; }
.rcpts input { height: 13px; }
.pick { display: flex; gap: 3px; padding: 0 3px; }
.rights { grid-column: 2; margin-top: 20px; border-collapse: collapse; table-layout: fixed; width: 100%; }
.rights th, .rights td { padding: 0; text-align: left; white-space: nowrap; vertical-align: middle; height: 14px; line-height: 9px; }
.rights th { height: 11px; }
.rights th:first-child, .rights td:first-child { padding-left: 1px; }
.rights a { color: #0072c6; }
.r-name { width: 100px; }
.r-flag { width: 23px; }
.r-comment { width: 37px; }
.rights [type="checkbox"] { appearance: none; display: grid; place-items: center; width: 7px; height: 7px; margin: 0 1px; border: 1px solid #888; background: #fff; }
.rights [type="checkbox"]:checked::before { content: ""; width: 2px; height: 5px; border: solid #222; border-width: 0 1px 1px 0; transform: rotate(40deg); }
.rights [type="checkbox"]:disabled { background: #e2e2e2; border-color: #c5c5c5; }
.hours { display: block; width: 27px; height: 13px; }
.body-label { margin-top: 12px; line-height: 9px; padding-top: 2px; }
textarea { margin-top: 12px; height: 94px; padding: 2px 3px; border-color: #5ba5dc; line-height: 9px; resize: none; outline: 0; }

/* taskbar */
.taskbar { display: flex; align-items: stretch; justify-content: space-between; height: 22px; padding-left: 8px; background: var(--sky); border-top: 1px solid #9fb9c2; color: #123; }
.apps { flex: 0 1 646px; display: grid; grid-template-columns: repeat(20, 1fr); }
.apps button { display: grid; place-items: center; }
.apps svg { width: 16px; height: 16px; }
.apps .open { background: #7dd0ec; border: 1px solid #4f9db8; border-width: 0 1px; }
.apps .ie { background: #a9e0f3; }
.logo6 { font-size: 6px; fill: #fff; }
.tray { display: flex; align-items: center; gap: 8px; padding-right: 12px; }
.tray time { font-size: var(--s); line-height: 9px; text-align: center; }
.up { border: 2px solid transparent; border-bottom-color: #123; border-top: 0; }
```
